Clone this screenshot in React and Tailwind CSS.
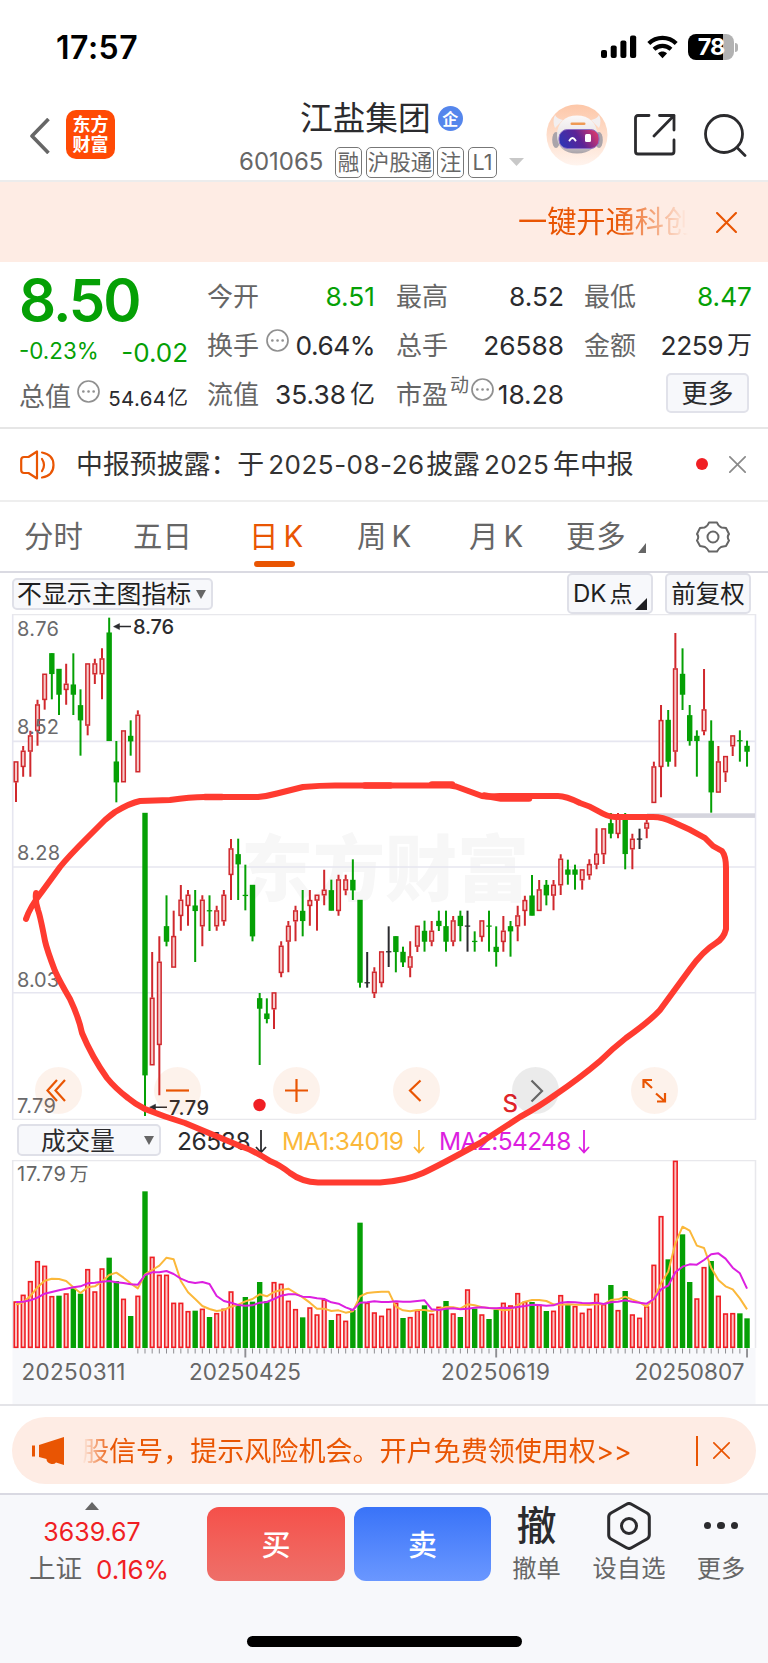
import { useMemo } from 'react';

// [kind, bodyTop, bodyBottom, high, low] in thirds of a pixel
const CANDLES = [
  ['r', 484, 547, 484, 606], ['r', 452, 501, 438, 530], ['r', 406, 455, 392, 530], ['r', 313, 393, 299, 437],
  ['r', 221, 300, 221, 329], ['g', 160, 221, 160, 298], ['g', 207, 283, 207, 345], ['r', 251, 270, 191, 314],
  ['g', 254, 283, 160, 345], ['g', 316, 360, 268, 467], ['r', 190, 377, 190, 406], ['r', 190, 223, 176, 252],
  ['r', 175, 223, 145, 298], ['g', 98, 422, 53, 422], ['g', 485, 546, 423, 607], ['r', 391, 547, 391, 547],
  ['g', 408, 423, 361, 467], ['r', 344, 517, 331, 517], ['g', 639, 1425, 639, 1548], ['r', 1193, 1396, 1056, 1396],
  ['r', 1085, 1335, 1009, 1486], ['g', 979, 1024, 886, 1039], ['r', 1008, 1103, 932, 1103], ['r', 899, 948, 855, 992],
  ['r', 884, 918, 870, 977], ['g', 917, 932, 870, 1086], ['r', 899, 979, 886, 1039], ['g', 931, 933, 886, 993],
  ['r', 931, 979, 917, 992], ['r', 884, 964, 870, 977], ['r', 745, 825, 717, 900], ['g', 763, 792, 716, 900],
  ['g', 885, 887, 794, 931], ['g', 855, 1008, 855, 1024], ['g', 1195, 1225, 1179, 1395], ['g', 1241, 1256, 1195, 1270],
  ['r', 1177, 1228, 1177, 1287], ['r', 1037, 1119, 1024, 1132], ['r', 977, 1025, 963, 1117], ['r', 931, 964, 917, 1024],
  ['g', 933, 962, 870, 1009], ['r', 900, 918, 870, 977], ['r', 884, 902, 884, 992], ['r', 869, 886, 809, 916],
  ['g', 871, 931, 839, 931], ['r', 838, 933, 824, 947], ['r', 838, 871, 824, 886], ['g', 840, 870, 778, 900],
  ['g', 900, 1147, 900, 1163], ['k', 1147, 1149, 1056, 1163], ['r', 1115, 1180, 1102, 1194], ['r', 1054, 1149, 1054, 1162],
  ['k', 1054, 1056, 979, 1101], ['g', 1009, 1055, 1009, 1117], ['g', 1056, 1086, 1040, 1101], ['r', 1069, 1103, 1024, 1132],
  ['r', 977, 1040, 977, 1056], ['g', 993, 1024, 962, 1055], ['r', 992, 1025, 963, 1039], ['g', 963, 977, 932, 993],
  ['g', 979, 1024, 932, 1055], ['r', 961, 1025, 948, 1039], ['g', 948, 977, 932, 1024], ['k', 977, 979, 932, 1055],
  ['g', 1023, 1025, 994, 1055], ['r', 961, 1011, 961, 1025], ['g', 977, 979, 932, 1055], ['g', 1041, 1055, 979, 1100],
  ['r', 992, 1026, 948, 1055], ['g', 979, 993, 963, 1070], ['r', 946, 979, 917, 1024], ['r', 900, 933, 887, 977],
  ['g', 887, 946, 825, 946], ['r', 868, 933, 840, 933], ['g', 855, 885, 840, 916], ['r', 854, 887, 840, 931],
  ['r', 776, 856, 763, 885], ['g', 809, 823, 779, 854], ['g', 809, 823, 794, 869], ['r', 808, 841, 808, 869],
  ['r', 792, 826, 778, 839], ['r', 761, 794, 685, 808], ['r', 685, 763, 685, 792], ['g', 670, 700, 639, 715],
  ['r', 655, 702, 639, 715], ['g', 655, 761, 639, 808], ['r', 716, 748, 701, 808], ['k', 716, 718, 686, 747],
  ['r', 668, 686, 655, 715], ['r', 499, 609, 485, 609], ['r', 360, 501, 315, 592], ['g', 360, 484, 330, 500],
  ['r', 205, 455, 99, 500], ['g', 222, 283, 145, 330], ['g', 346, 422, 315, 437], ['g', 408, 422, 391, 530],
  ['r', 328, 394, 207, 406], ['g', 423, 576, 361, 638], ['r', 484, 578, 438, 578], ['r', 468, 517, 468, 546],
  ['r', 406, 439, 406, 468], ['g', 421, 423, 391, 485], ['g', 438, 454, 422, 500],
];

const VOLUMES = `574r 554r 513r 453r 467r 558r 557g 550r 535g 551g 477r 544r 475r 443g 513g 566r 618g 557r 244g 440r
494r 494r 578r 578r 603r 602g 596r 621g 609r 596r 544r 583g 561g 575g 516g 573g 516r 521r 572r 597r 622g 592r 613r
568r 630g 612r 632r 600g 338g 578r 607r 617r 596r 578r 624g 621r 600r 586g 611r 590r 573g 610r 621g 538r 596g 613r
627g 599g 578r 586r 549r 575r 576g 584r 603g 602r 555r 584g 588r 608r 596r 551r 582r 525g 600r 543g 613r 623r 589r
464r 318r 448g 152r 373g 516g 565r 471r 453g 557r 610r 609r 610g 625g`.split(/\s+/);

const MA1 = [
  584, 577, 558, 532, 512, 506, 507, 513, 532, 549, 532, 529, 515, 495, 488, 503, 520, 535, 493, 480, 467, 443, 448,
  513, 547, 567, 588, 597, 603, 600, 590, 584, 574, 567, 553, 559, 546, 540, 536, 549, 562, 578, 596, 596, 603, 601,
  608, 604, 559, 549, 547, 545, 545, 590, 601, 604, 600, 600, 604, 597, 591, 592, 596, 583, 586, 592, 594, 596, 601,
  599, 585, 575, 570, 570, 573, 583, 584, 583, 584, 584, 585, 582, 583, 570, 568, 560, 569, 577, 590, 565, 520, 485,
  400, 350, 362, 407, 414, 473, 510, 529, 538, 565, 598,
];
const MA2 = [
  576, 575, 571, 563, 551, 546, 541, 536, 532, 529, 520, 518, 515, 513, 517, 519, 523, 524, 495, 487, 487, 483, 492,
  506, 515, 519, 516, 522, 558, 573, 578, 585, 587, 586, 578, 576, 567, 557, 553, 553, 560, 561, 565, 567, 577, 581,
  592, 600, 578, 577, 574, 576, 576, 574, 575, 575, 573, 571, 598, 600, 596, 595, 598, 596, 593, 592, 594, 595, 593,
  594, 591, 588, 584, 585, 587, 586, 578, 576, 577, 579, 580, 578, 582, 577, 575, 571, 575, 578, 581, 567, 538, 527,
  487, 470, 463, 464, 450, 433, 430, 446, 473, 490, 536,
];

const COLORS = { r: '#d0282d', g: '#05a005', k: '#2b2b2e' };
const xAt = (i) => 16 + i * 7.167;

function CandleChart() {
  const y = (v) => v / 3 - 14;
  return (
    <svg width="768" height="506" className="block">
      <g fontFamily="Noto Sans CJK SC" fontWeight="900" fontSize="72" fill="#f7f7f7">
        <text x="241" y="281">东方财富</text>
      </g>
      <g stroke="#e6e6f0" strokeWidth="1.6">
        <path d="M13 127.4H755M13 253H755M13 378.7H755" />
        <path d="M12.7 0V505.5M755.5 0V505.5" />
        <path d="M12 0.4H756M12 505.6H756" stroke="#e8e8ec" />
      </g>
      <rect x="647" y="199.3" width="108" height="4.6" fill="#d5d5de" />
      {CANDLES.map(([c, top, bottom, high, low], i) => {
        const x = xAt(i);
        const fill = COLORS[c];
        return (
          <g key={i}>
            {c === 'r' ? (
              <>
                <path d={`M${x} ${y(high)}V${y(top)}M${x} ${y(bottom)}V${y(low)}`} stroke={fill} strokeWidth="2" />
                <rect x={x - 1.8} y={y(top) + 0.6} width="3.6" height={(bottom - top) / 3 - 1.2} fill="#f6cccc" stroke={fill} strokeWidth="1.5" />
              </>
            ) : (
              <>
                <path d={`M${x} ${y(high)}V${y(low)}`} stroke={fill} strokeWidth="2" />
                <rect x={x - 2.7} y={y(top) - 0.2} width="5.4" height={(bottom - top) / 3 + 0.6} fill={fill} />
              </>
            )}
          </g>
        );
      })}
      <g fontFamily="Inter" fontSize="20" fill="#6a6a6c">
        <text x="17" y="22" textLength="42">8.76</text>
        <text x="17" y="119.7" textLength="42">8.52</text>
        <text x="17" y="246" textLength="43">8.28</text>
        <text x="17" y="372.700" textLength="42">8.03</text>
        <text x="17" y="498.5" textLength="39">7.79</text>
      </g>
      <g fontFamily="Inter" fontSize="20" fontWeight="500" fill="#2b2b2e">
        <text x="133" y="20" textLength="41">8.76</text>
        <text x="169" y="500.5" textLength="40">7.79</text>
      </g>
      <g stroke="#2b2b2e" strokeWidth="1.5" fill="#2b2b2e">
        <path d="M118 12.6H131M154 493.2H167" />
        <path d="M113.500 12.600l6-3v6zM149.500 493.200l6-3v6z" strokeWidth="0.5" />
      </g>
      <circle cx="259.500" cy="491" r="6.200" fill="#f01f24" />
      <text x="502.500" y="497.500" fontFamily="Inter" fontSize="24" fontWeight="500" fill="#e0242a">S</text>
    </svg>
  );
}

function VolumeChart() {
  const y = (v) => v / 3 - 50;
  const line = (points) => points.map((v, i) => `${xAt(i)},${y(v)}`).join(' ');
  const ticks = useMemo(() => VOLUMES.map((_, i) => i).filter((i) => i > 16), []);
  return (
    <svg width="768" height="244" className="block">
      <rect x="12.500" y="188" width="743" height="56" fill="#f7f8fb" />
      <path d="M12.700 188V0.600H755.500V188" fill="none" stroke="#e8e8ec" strokeWidth="1.500" />
      {VOLUMES.map((item, i) => {
        const top = y(parseInt(item, 10));
        const x = xAt(i);
        return item.endsWith('g') ? (
          <rect key={i} x={x - 2.7} y={top} width="5.400" height={188 - top} fill="#05a005" />
        ) : (
          <rect key={i} x={x - 1.800} y={top + 0.7} width="3.600" height={186.600 - top} fill="#f9c4c4" stroke="#f01f24" strokeWidth="1.600" />
        );
      })}
      <polyline points={line(MA1)} fill="none" stroke="#fbb83a" strokeWidth="2" strokeLinejoin="round" />
      <polyline points={line(MA2)} fill="none" stroke="#dc1fe0" strokeWidth="2" strokeLinejoin="round" />
      {ticks.map((i) => {
        const major = [32, 67, 102].includes(i);
        return (
          <path key={i} d={`M${xAt(i)} 188.500V${major ? 197.500 : 193.500}`} stroke="#8f8f93" strokeWidth={major ? 1.900 : 1} />
        );
      })}
      <g fontFamily="Inter" fontSize="22.500" fill="#666">
        <text x="21.500" y="220" textLength="104">20250311</text>
        <text x="189" y="220" textLength="112">20250425</text>
        <text x="441" y="220" textLength="109">20250619</text>
        <text x="634.500" y="220" textLength="110">20250807</text>
      </g>
      <g fill="#666" fontSize="20">
        <text x="17" y="20.700" fontFamily="Inter" textLength="49">17.79</text>
        <text x="69.500" y="20.700" fontFamily="Noto Sans CJK SC" fontSize="19">万</text>
      </g>
    </svg>
  );
}

function Scribble() {
  return (
    <svg width="768" height="790" viewBox="0 614 768 790" className="absolute inset-0 pointer-events-none">
      <g fill="none" stroke="#ff3b30" strokeWidth="6" strokeLinecap="round" strokeLinejoin="round">
        <path d="M26 919Q30 907 41 893L60 867Q68 857 87 838L105 820Q111 815 115 812Q130 803 140 801L170 800Q190 797 205 797H258Q268 796 277 793.500L303 787Q320 785.500 335 785.500H450L456 786.500L482 796Q490 797 500 796H558Q566 796 580 803Q590 806 598 811Q608 817 615 817H653Q663 817 673 822Q690 829 705 838L713 846L722 851Q726 856 726 868V929Q724 938 716 943Q703 951 690 969Q676 988 660 1010Q650 1021 626 1038Q612 1049 600 1061Q580 1078 555 1095Q540 1106 520 1117Q500 1130 480 1143Q440 1165 423 1173Q405 1181 380 1182.500H318Q302 1182 290 1173Q280 1165 270 1161Q253 1150 240 1146L185 1123Q165 1117 145 1109Q135 1104 128 1098Q115 1088 107 1078Q92 1057 82 1033Q79 1018 70 999Q60 982 55 971Q47 950 45 941Q40 915 38 910Q35 901 36 893" />
        <path d="M484 795.500L501 798.500H529M205 797H222M432 784.500H452M365 785.500H390" strokeWidth="6.500" />
      </g>
    </svg>
  );
}

function Close({ size, className, width = 2 }) {
  return (
    <svg width={size} height={size} viewBox="0 0 20 20" className={className} fill="none" stroke="currentColor" strokeWidth={width} strokeLinecap="round">
      <path d="M1 1L19 19M19 1L1 19" />
    </svg>
  );
}

function MoreDot({ className = '' }) {
  return (
    <svg width="23" height="23" viewBox="0 0 23 23" className={className} fill="none" stroke="#909090" strokeWidth="1.700">
      <circle cx="11.500" cy="11.500" r="10.500" />
      <path d="M6.300 11.500h.1M11.500 11.500h.1M16.600 11.500h.1" strokeWidth="2.600" strokeLinecap="round" />
    </svg>
  );
}

function Down({ color }) {
  return (
    <svg width="12" height="24" viewBox="0 0 12 24" className="mt-[4px]" fill="none" stroke={color} strokeWidth="1.800">
      <path d="M6 0V22M1 17L6 22.500L11 17" />
    </svg>
  );
}

function StatusBar() {
  return (
    <div className="h-[94px] flex items-center pl-[56px] pr-[30px]">
      <div className="text-[32px] font-semibold text-black tracking-[0.5px] mt-[1px]">17:57</div>
      <svg width="36" height="24" viewBox="0 0 36 24" className="ml-auto">
        <rect x="0" y="15" width="6" height="8" rx="2" />
        <rect x="9.700" y="10.500" width="6" height="12.500" rx="2" />
        <rect x="19.400" y="5.500" width="6" height="17.500" rx="2" />
        <rect x="29" y="0.500" width="6.200" height="22.500" rx="2" />
      </svg>
      <svg width="31" height="24" viewBox="0 0 31 24" className="ml-[10px]" fill="none" stroke="#000" strokeWidth="4.200">
        <path d="M1.800 8.500C9.500 1 21.500 1 29.200 8.500" />
        <path d="M7 14.200C12 9.700 19 9.700 24 14.200" />
        <path d="M15.500 23.200L11 18.400C13.500 16 17.500 16 20 18.400Z" fill="#000" stroke="none" />
      </svg>
      <div className="ml-[10px] w-[46px] h-[26px] rounded-[8px] bg-[linear-gradient(90deg,#000_76%,#b2b2b2_76%)] text-white text-[23.5px] font-bold tracking-[-1px] flex items-center justify-center">
        78
      </div>
      <div className="ml-[1px] w-[3px] h-[9px] rounded-r-full bg-[#b2b2b2]" />
    </div>
  );
}

function Tag({ children, className }) {
  return (
    <span className={`h-[31px] border-[1.5px] border-[#777] rounded-[5px] flex items-center justify-center text-[21.5px] ${className}`}>
      {children}
    </span>
  );
}

function Header() {
  return (
    <div className="h-[88px] flex border-b-2 border-[#ececec]">
      <svg width="20" height="36" viewBox="0 0 20 36" className="ml-[30px] mt-[24px]" fill="none" stroke="#666" strokeWidth="3.600" strokeLinejoin="round">
        <path d="M18.500 1L2 18L18.500 35" />
      </svg>
      <div className="ml-[16px] mt-[16px] w-[49px] h-[49px] rounded-[10px] bg-[#ff4a05] text-white text-[18px] leading-[20px] font-bold flex flex-col items-center justify-center">
        <span>东方</span>
        <span>财富</span>
      </div>
      <div className="ml-[124px] w-[289px] flex flex-col">
        <div className="flex items-center h-[50px] pl-[61px]">
          <span className="text-[32.7px] text-[#2b2b2e]">江盐集团</span>
          <span className="ml-[7px] -mt-[1px] w-[25px] h-[25px] rounded-full bg-[#5586ec] text-white text-[16px] font-bold flex items-center justify-center">企</span>
        </div>
        <div className="flex items-center text-[#666] mt-[2px] h-[32px]">
          <span className="text-[24px] w-[96px] tracking-[0px]">601065</span>
          <Tag className="w-[27px]">融</Tag>
          <Tag className="w-[68px] ml-[4px]">沪股通</Tag>
          <Tag className="w-[27px] ml-[3px]">注</Tag>
          <Tag className="w-[29px] ml-[4px]">L1</Tag>
          <svg width="15" height="8" className="ml-[12px]"><path d="M0 0H15L7.500 8Z" fill="#c8c8c8" /></svg>
        </div>
      </div>
      <svg width="62" height="62" viewBox="0 0 62 62" className="ml-[18px] mt-[10px]">
        <defs>
          <linearGradient id="halo" x1="0" y1="0" x2="0" y2="1">
            <stop offset="0" stopColor="#fdc7a8" /><stop offset="1" stopColor="#fff4ee" />
          </linearGradient>
          <linearGradient id="visor" x1="0" y1="0.600" x2="1" y2="0.300">
            <stop offset="0" stopColor="#2f35b4" /><stop offset="0.500" stopColor="#5c2396" /><stop offset="1" stopColor="#dc3a6c" />
          </linearGradient>
          <linearGradient id="shell" x1="0" y1="0" x2="0" y2="1">
            <stop offset="0" stopColor="#fbf9f9" /><stop offset="0.600" stopColor="#e6e2e4" /><stop offset="1" stopColor="#a8a2a8" />
          </linearGradient>
        </defs>
        <circle cx="31" cy="31" r="30.500" fill="url(#halo)" />
        <path d="M9 11Q6 17 9 24L17 16Q11 15 9 11ZM53 11Q56 17 53 24L45 16Q51 15 53 11Z" fill="#f3eff0" />
        <ellipse cx="10" cy="36" rx="3.800" ry="8" fill="#aaa4aa" />
        <ellipse cx="53" cy="36" rx="3.800" ry="8" fill="#aaa4aa" />
        <path d="M31 11.500C43 11.500 51 19 51.500 31C51.500 43 44 49.500 31 49.500C18 49.500 11 43 11 31C11 19 19 11.500 31 11.500Z" fill="url(#shell)" />
        <rect x="13" y="25.500" width="40" height="19" rx="8.500" fill="url(#visor)" stroke="#8d6fc4" strokeWidth="1" />
        <path d="M23.500 36.500Q26.500 31.500 29.500 36.500" fill="none" stroke="#fff" strokeWidth="2" strokeLinecap="round" />
        <rect x="39" y="30" width="6" height="8" rx="1.500" fill="#fff" />
        <rect x="24.500" y="18.500" width="15" height="2.600" rx="1.300" fill="#ef9a55" />
      </svg>
      <svg width="42" height="42" viewBox="0 0 42 42" className="ml-[26px] mt-[20px]" fill="none" stroke="#2b2b2e" strokeWidth="2.800" strokeLinecap="round" strokeLinejoin="round">
        <path d="M15 1.500H4Q1.500 1.500 1.500 4V37.500Q1.500 40 4 40H37.500Q40 40 40 37.500V26" />
        <path d="M25.500 1.500H40V16M40 1.500L20 22" />
      </svg>
      <svg width="43" height="43" viewBox="0 0 43 43" className="ml-[28px] mt-[20px]" fill="none" stroke="#2b2b2e" strokeWidth="2.800" strokeLinecap="round">
        <circle cx="20" cy="20" r="18.500" />
        <path d="M33 33.500L41 41.500" />
      </svg>
    </div>
  );
}

function Stat({ label, extra, value, unit, green, tight }) {
  return (
    <div className="flex items-center h-[49px] w-[168px]">
      <span className="text-[26px] text-[#666]">{label}</span>
      {extra}
      <span className={`ml-auto text-[26.3px] ${tight ? 'tracking-[-0.5px]' : ''} ${green ? 'text-[#05a005]' : 'text-[#2b2b2e]'}`}>{value}</span>
      {unit && <span className="text-[25px] text-[#2b2b2e] ml-[4px]">{unit}</span>}
    </div>
  );
}

function Quote() {
  return (
    <div className="h-[167px] flex border-b-2 border-[#e6e6e6] pt-[10px] pl-[19px]">
      <div className="w-[169px]">
        <div className="h-[56px] flex items-center text-[58px] font-semibold text-[#05a005] tracking-[-2px]">8.50</div>
        <div className="h-[46px] flex items-center justify-between text-[#05a005] leading-none">
          <span className="text-[22.4px]">-0.23%</span>
          <span className="text-[26px] mt-[4px]">-0.02</span>
        </div>
        <div className="h-[44px] flex items-center">
          <span className="text-[26px] text-[#666]">总值</span>
          <MoreDot className="ml-[6px] -mt-[10px]" />
          <span className="ml-auto text-[20.5px] text-[#2b2b2e] mt-[6px] tracking-[0.4px]">54.64</span>
          <span className="text-[20.500px] text-[#2b2b2e] ml-[1px] mt-[5px]">亿</span>
        </div>
      </div>
      <div className="ml-[19px]">
        <Stat label="今开" value="8.51" green />
        <Stat label="换手" value="0.64%" tight extra={<MoreDot className="ml-[7px] -mt-[10px]" />} />
        <Stat label="流值" value="35.38" unit="亿" />
      </div>
      <div className="ml-[21px]">
        <Stat label="最高" value="8.52" />
        <Stat label="总手" value="26588" />
        <Stat
          label="市盈"
          value="18.28"
          extra={
            <>
              <span className="text-[19px] text-[#666] -mt-[17px] ml-[2px]">动</span>
              <MoreDot className="ml-[2px] -mt-[10px] shrink-0" />
            </>
          }
        />
      </div>
      <div className="ml-[20px]">
        <Stat label="最低" value="8.47" green />
        <Stat label="金额" value="2259" unit="万" tight />
        <div className="ml-[82px] mt-[3px] w-[83px] h-[40px] rounded-[5px] border-2 border-[#e1e2ea] bg-[#f7f8fb] flex items-center justify-center text-[26px] text-[#2b2b2e]">
          更多
        </div>
      </div>
    </div>
  );
}

function News() {
  return (
    <div className="h-[73px] flex items-center border-b-2 border-[#eee] pl-[20px] pr-[22px] text-[#333]">
      <svg width="35" height="30" viewBox="0 0 35 30" fill="none" stroke="#e95503" strokeWidth="2.200" strokeLinecap="round" strokeLinejoin="round">
        <path d="M17 1.500V28.500L8.500 23H4Q1.200 23 1.200 20V10Q1.200 7 4 7H8.500Z" />
        <path d="M22 9Q26 15 22 21M22 2.500Q33.500 4.500 33.500 15Q33.500 25.500 22 27.500" />
      </svg>
      <div className="ml-[21px] flex items-center text-[26.9px] whitespace-nowrap">
        <span>中报预披露：于</span>
        <span className="ml-[4px] w-[158px] text-[26px] tracking-[0.5px]">2025-08-26</span>
        <span>披露</span>
        <span className="ml-[4px] w-[69px] text-[26px] tracking-[0.3px]">2025</span>
        <span>年中报</span>
      </div>
      <span className="ml-auto w-[12px] h-[12px] rounded-full bg-[#f01f24] -mt-[2px]" />
      <Close size={17} className="ml-[21px] text-[#8a8a8a]" />
    </div>
  );
}

function Tabs() {
  return (
    <div className="h-[71px] relative flex items-center border-b-2 border-[#dadae2] text-[29.4px] text-[#666] whitespace-nowrap pl-[24px] pt-[2px]">
      <span className="w-[109px]">分时</span>
      <span className="w-[116px]">五日</span>
      <span className="w-[108px] text-[#e95503]">日<span className="ml-[5px]">K</span></span>
      <span className="w-[112px]">周<span className="ml-[5px]">K</span></span>
      <span className="w-[97px]">月<span className="ml-[5px]">K</span></span>
      <span className="w-[72px] tracking-[0.8px]">更多</span>
      <svg width="8" height="10" className="mt-[20px]"><path d="M8 0V10H0Z" fill="#666" /></svg>
      <svg width="34" height="32" viewBox="0 0 34 32" className="ml-[50px] -mt-[2px]" fill="none" stroke="#666" strokeWidth="2" strokeLinejoin="round">
        <path d="M13 1.500H21Q22.500 5.500 25.500 6.500Q28 6.500 30 7L33 13Q30.500 16 33 19.500L30 25Q27 25.500 25 26Q22.500 27.500 21 30.500H13Q11.500 27.500 9 26Q7 25.500 4 25L1 19.500Q3.500 16 1 13L4 7Q6 6.500 8.500 6.500Q11.500 5.500 13 1.500Z" />
        <circle cx="17" cy="16" r="5.500" />
      </svg>
      <span className="absolute left-[254px] bottom-[4px] w-[41px] h-[6px] rounded-full bg-[#e95503]" />
    </div>
  );
}

function Toolbar() {
  return (
    <div className="h-[41px] flex items-center pl-[12px] text-[#1f1f22] whitespace-nowrap">
      <div className="w-[201px] h-[32px] rounded-[5px] border-2 border-[#dfe0e8] bg-[#f7f8fb] flex items-center pl-[3px] text-[24.9px] pt-[1px] leading-none">
        不显示主图指标
        <svg width="10" height="9" className="ml-[5px]"><path d="M0 0H10L5 9Z" fill="#666" /></svg>
      </div>
      <div className="ml-[354px] relative w-[86px] h-[41px] rounded-[5px] border-2 border-[#dfe0e8] bg-[#f7f8fb] flex items-center pl-[4px] pt-[1px] text-[24px] leading-none">
        DK<span className="ml-[3px] text-[23px]">点</span>
        <svg width="12" height="12" className="absolute right-[4px] bottom-[2px]"><path d="M12 0V12H0Z" fill="#1f1f22" /></svg>
      </div>
      <div className="ml-[12px] w-[86px] h-[41px] rounded-[5px] border-2 border-[#dfe0e8] bg-[#f7f8fb] flex items-center justify-center pt-[1px] text-[24.5px] leading-none">
        前复权
      </div>
    </div>
  );
}

const CONTROLS = [
  { d: 'M22 13L12.500 23.500L22 34M30 13L20.500 23.500L30 34' },
  { d: 'M12 23.500H35' },
  { d: 'M12 23.500H35M23.500 12V35' },
  { d: 'M27.500 13.500L17 23.500L27.500 34' },
  { d: 'M19.500 13.500L30 24L19.500 34.500', grey: true },
  { d: 'M12.500 21V13H21M13 13.500L21 21M25 26.500L33.500 34M34 26V34.500H26' },
];

function Controls() {
  return (
    <div className="absolute left-[35px] top-[453px] flex gap-[72.200px]">
      {CONTROLS.map(({ d, grey }) => (
        <button key={d} className={`w-[47px] h-[47px] rounded-full ${grey ? 'bg-[#000]/8' : 'bg-[#e95503]/8'}`}>
          <svg width="47" height="47" fill="none" stroke={grey ? '#666' : '#e95503'} strokeWidth="2.200">
            <path d={d} />
          </svg>
        </button>
      ))}
    </div>
  );
}

function Footer() {
  return (
    <div className="h-[170px] border-t-2 border-[#d9d9e2] bg-[#f7f8fb] flex flex-col">
      <div className="flex h-[88px]">
        <div className="w-[184px] pt-[7px] flex flex-col items-center">
          <svg width="14" height="8"><path d="M7 0L14 8H0Z" fill="#666" /></svg>
          <div className="h-[46px] flex items-center text-[25px] text-[#f01f24] tracking-[0px]">3639.67</div>
          <div className="h-[26px] flex items-center pl-[14px] w-full justify-center">
            <span className="text-[26.5px] text-[#666]">上证</span>
            <span className="ml-[14px] text-[26px] text-[#f01f24]">0.16%</span>
          </div>
        </div>
        <div className="ml-[23px] mt-[12px] w-[138px] h-[74px] rounded-[12px] bg-linear-to-b from-[#f5504a] to-[#ee6f69] text-white text-[29px] font-medium flex items-center justify-center pt-[3px]">买</div>
        <div className="ml-[9px] mt-[12px] w-[137px] h-[74px] rounded-[12px] bg-linear-to-b from-[#3973f8] to-[#6a97ff] text-white text-[29px] font-medium flex items-center justify-center pt-[3px]">卖</div>
        <div className="flex text-[24.300px] text-[#666] leading-none">
          <div className="w-[91px] flex flex-col items-center">
            <div className="h-[61px] flex items-center text-[40px] font-medium text-[#2b2b2e]">撤</div>
            撤单
          </div>
          <div className="w-[94px] flex flex-col items-center">
            <div className="h-[61px] flex items-center">
              <svg width="44" height="48" viewBox="0 0 44 48" fill="none" stroke="#2b2b2e" strokeWidth="3" strokeLinejoin="round">
                <path d="M19.500 2.200Q22 0.800 24.500 2.200L40 11Q42.300 12.400 42.300 15V33Q42.300 35.600 40 37L24.500 45.800Q22 47.200 19.500 45.800L4 37Q1.700 35.600 1.700 33V15Q1.700 12.400 4 11Z" />
                <circle cx="22" cy="24" r="7.500" />
              </svg>
            </div>
            设自选
          </div>
          <div className="w-[90px] flex flex-col items-center">
            <div className="h-[61px] flex items-center gap-[6px]">
              <i className="w-[7.500px] h-[7.500px] rounded-full bg-[#2b2b2e]" />
              <i className="w-[7.500px] h-[7.500px] rounded-full bg-[#2b2b2e]" />
              <i className="w-[7.500px] h-[7.500px] rounded-full bg-[#2b2b2e]" />
            </div>
            更多
          </div>
        </div>
      </div>
      <div className="mt-[53px] mx-auto w-[275px] h-[11px] rounded-full bg-black" />
    </div>
  );
}

export default function App() {
  return (
    <div className="w-[768px] h-[1663px] bg-white overflow-hidden font-[Inter,'Noto_Sans_CJK_SC',sans-serif]">
      <StatusBar />
      <Header />
      <div className="h-[80px] bg-[#feece4] flex items-center text-[#e95503]">
        <div className="ml-[518px] w-[178px] whitespace-nowrap text-[29.2px] mask-[linear-gradient(90deg,#000_96px,transparent_170px)]">
          一键开通科创
        </div>
        <Close size={21} className="ml-[20px]" />
      </div>
      <Quote />
      <News />
      <Tabs />
      <Toolbar />
      <div className="relative">
        <CandleChart />
        <Controls />
        <div className="h-[40px] flex items-center pl-[17px] text-[24.500px] text-[#2b2b2e]">
          <div className="w-[144px] h-[32px] rounded-[5px] border-2 border-[#dfe0e8] bg-[#f7f8fb] flex items-center pl-[22px] text-[24.6px] pt-[2px]">
            成交量
            <svg width="10" height="9" className="ml-[29px] -mt-[2px]"><path d="M0 0H10L5 9Z" fill="#666" /></svg>
          </div>
          <span className="ml-[16px] w-[78px] tracking-[-0.4px] mt-[3px]">26588</span>
          <Down color="#2b2b2e" />
          <span className="ml-[15px] w-[131px] text-[#fbb83a] tracking-[-0.6px] mt-[3px]">MA1:34019</span>
          <Down color="#fbb83a" />
          <span className="ml-[14px] w-[139px] text-[#dc1fe0] tracking-[-0.6px] mt-[3px]">MA2:54248</span>
          <Down color="#dc1fe0" />
        </div>
        <VolumeChart />
        <Scribble />
      </div>
      <div className="h-[89px] border-t-2 border-[#e4e4e8] pt-[11px] px-[12px]">
        <div className="h-[67px] rounded-full bg-[#feece4] flex items-center text-[#e95503]">
          <svg width="33" height="28" viewBox="0 0 33 28" className="ml-[20px]" fill="currentColor">
            <path d="M0 8.500H3V19.500H0ZM7 8L32 0V28L24 25.500Q22 28 18 26.500Q14.500 25 14.500 22L7 20Z" />
          </svg>
          <div className="ml-[17px] mt-[3px] w-[560px] text-[27.05px] whitespace-nowrap mask-[linear-gradient(90deg,transparent_0,#000_30px)]">
            股信号，提示风险机会。开户免费领使用权&gt;&gt;
          </div>
          <span className="ml-auto w-[2px] h-[30px] bg-[#e95503]" />
          <Close size={17} className="ml-[15px] mr-[26px]" />
        </div>
      </div>
      <Footer />
    </div>
  );
}
